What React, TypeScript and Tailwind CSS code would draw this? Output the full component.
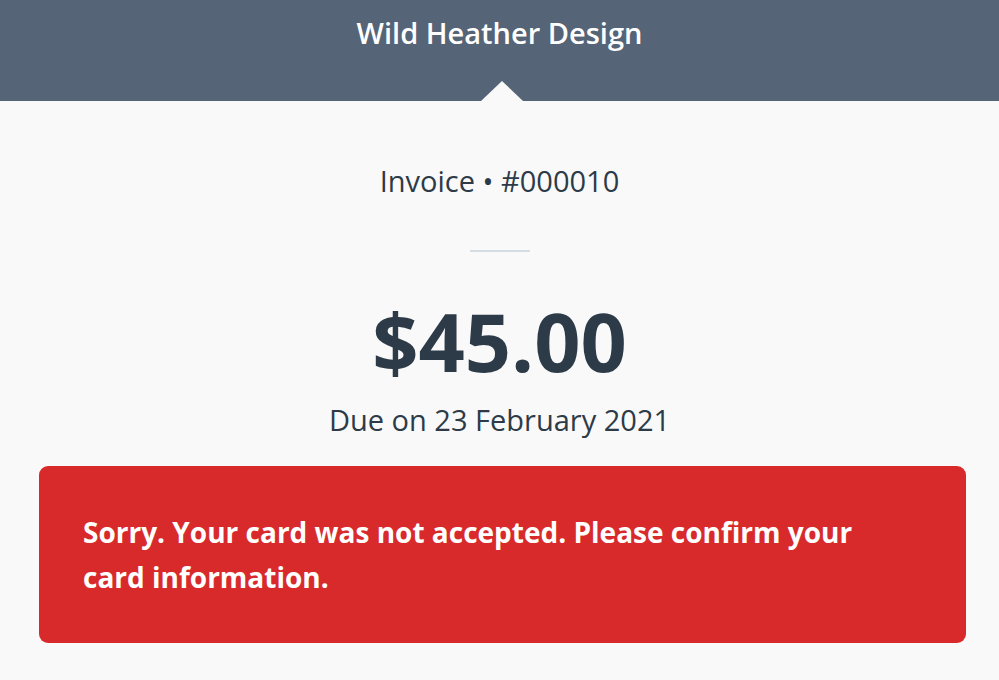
import React from 'react';

const font = { fontFamily: '"Open Sans", Lato, sans-serif' };

export default function App() {
  return (
    <div className="w-[999px] h-[680px] bg-[#f9f9f9] overflow-hidden text-[#2d3b48]" style={font}>
      {/* header */}
      <div className="relative h-[101px] bg-[#556477] flex justify-center pt-[14px]">
        <h1 className="text-[29px] font-semibold text-white leading-[38px]">Wild Heather Design</h1>
        <div className="absolute bottom-0 left-[481px] w-0 h-0 border-l-[21px] border-r-[21px] border-b-[20px] border-l-transparent border-r-transparent border-b-[#f9f9f9]" />
      </div>

      {/* invoice summary */}
      <div className="flex flex-col items-center">
        <div className="mt-[61px] text-[29px] leading-[38px]">Invoice • #000010</div>
        <div className="mt-[50px] w-[60px] h-[2px] bg-[#d5dce3]" />
        <div className="mt-[44px] text-[81px] font-bold leading-[90px]">$45.00</div>
        <div className="mt-[15px] text-[29px] leading-[38px]">Due on 23 February 2021</div>
      </div>

      {/* error */}
      <div className="ml-[39px] mr-[33px] mt-[27px] h-[177px] rounded-[9px] bg-[#d92a2b] pl-[44px] pr-[60px] pt-[44px]">
        <p className="text-white font-bold text-[28px] leading-[45px]">
          Sorry. Your card was not accepted. Please confirm your card information.
        </p>
      </div>
    </div>
  );
}
